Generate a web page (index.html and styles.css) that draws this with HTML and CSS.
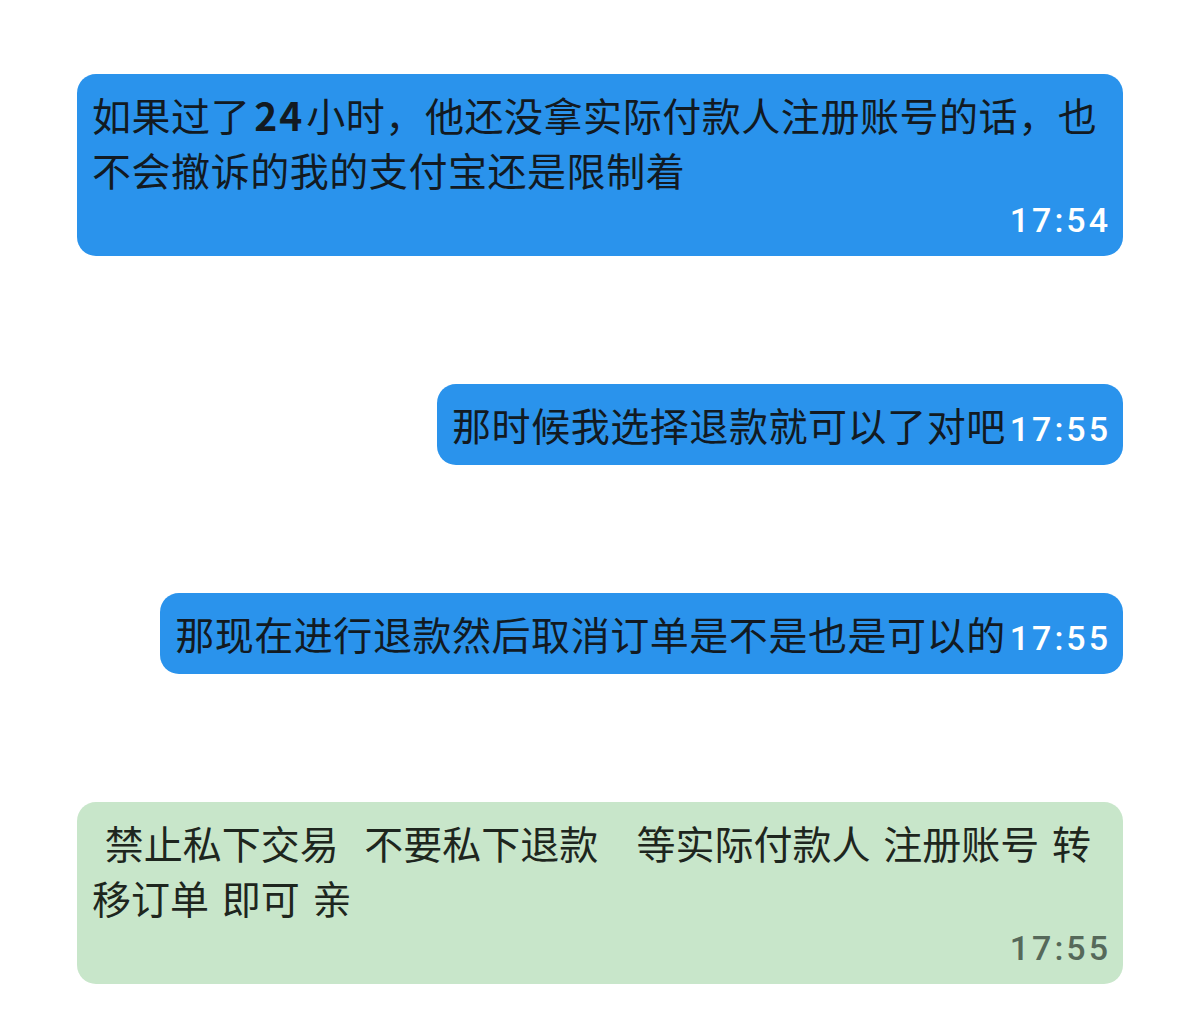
FILE: index.html
```html
<!DOCTYPE html>
<html lang="zh-CN">
<head>
<meta charset="utf-8">
<title>Chat</title>
<link rel="stylesheet" href="styles.css">
</head>
<body>
<div class="chat">
  <div class="bubble blue multi">
    <div class="text">如果过了<span class="num">24</span>小时，他还没拿实际付款人注册账号的话，也<br>不会撤诉的我的支付宝还是限制着</div>
    <div class="time">17:54</div>
  </div>
  <div class="bubble blue single">
    <div class="text">那时候我选择退款就可以了对吧</div>
    <div class="time">17:55</div>
  </div>
  <div class="bubble blue single">
    <div class="text">那现在进行退款然后取消订单是不是也是可以的</div>
    <div class="time">17:55</div>
  </div>
  <div class="bubble green multi">
    <div class="text spaced"> 禁止私下交易  不要私下退款   等实际付款人 注册账号 转<br>移订单 即可 亲</div>
    <div class="time">17:55</div>
  </div>
</div>
</body>
</html>
```

FILE: styles.css
```css
html, body {
  margin: 0;
  padding: 0;
  background: #ffffff;
}

.chat {
  display: flex;
  flex-direction: column;
  align-items: flex-end;
  gap: 128px;
  padding: 74px 77px 0 77px;
}

.bubble {
  box-sizing: border-box;
  border-radius: 19px;
  padding: 13px 15px 13px 15px;
}

.blue {
  background: #2a93ec;
}

.green {
  background: #c8e6ca;
}

.text {
  font-family: "Noto Sans CJK SC", "Noto Sans", sans-serif;
  font-size: 39px;
  line-height: 55px;
  color: #121a22;
}

.blue .text {
  letter-spacing: 0.55px;
}

.green .text {
  color: #1e261e;
}

.spaced {
  white-space: pre-wrap;
  word-spacing: 4px;
}

.num {
  font-weight: 700;
  letter-spacing: 2px;
  padding: 0 2px 0 4px;
}

.time {
  font-family: "Roboto", "Liberation Sans", sans-serif;
  font-size: 34px;
  font-weight: 500;
  letter-spacing: 3px;
  color: #ffffff;
  white-space: nowrap;
}

.green .time {
  color: #56695a;
}

.multi {
  width: 1046px;
}

.multi .time {
  text-align: right;
  line-height: 46px;
  margin-right: -3px;
}

.single {
  display: flex;
  align-items: baseline;
  height: 81px;
}

.single .time {
  margin-left: 4px;
  margin-right: -3px;
}
```
